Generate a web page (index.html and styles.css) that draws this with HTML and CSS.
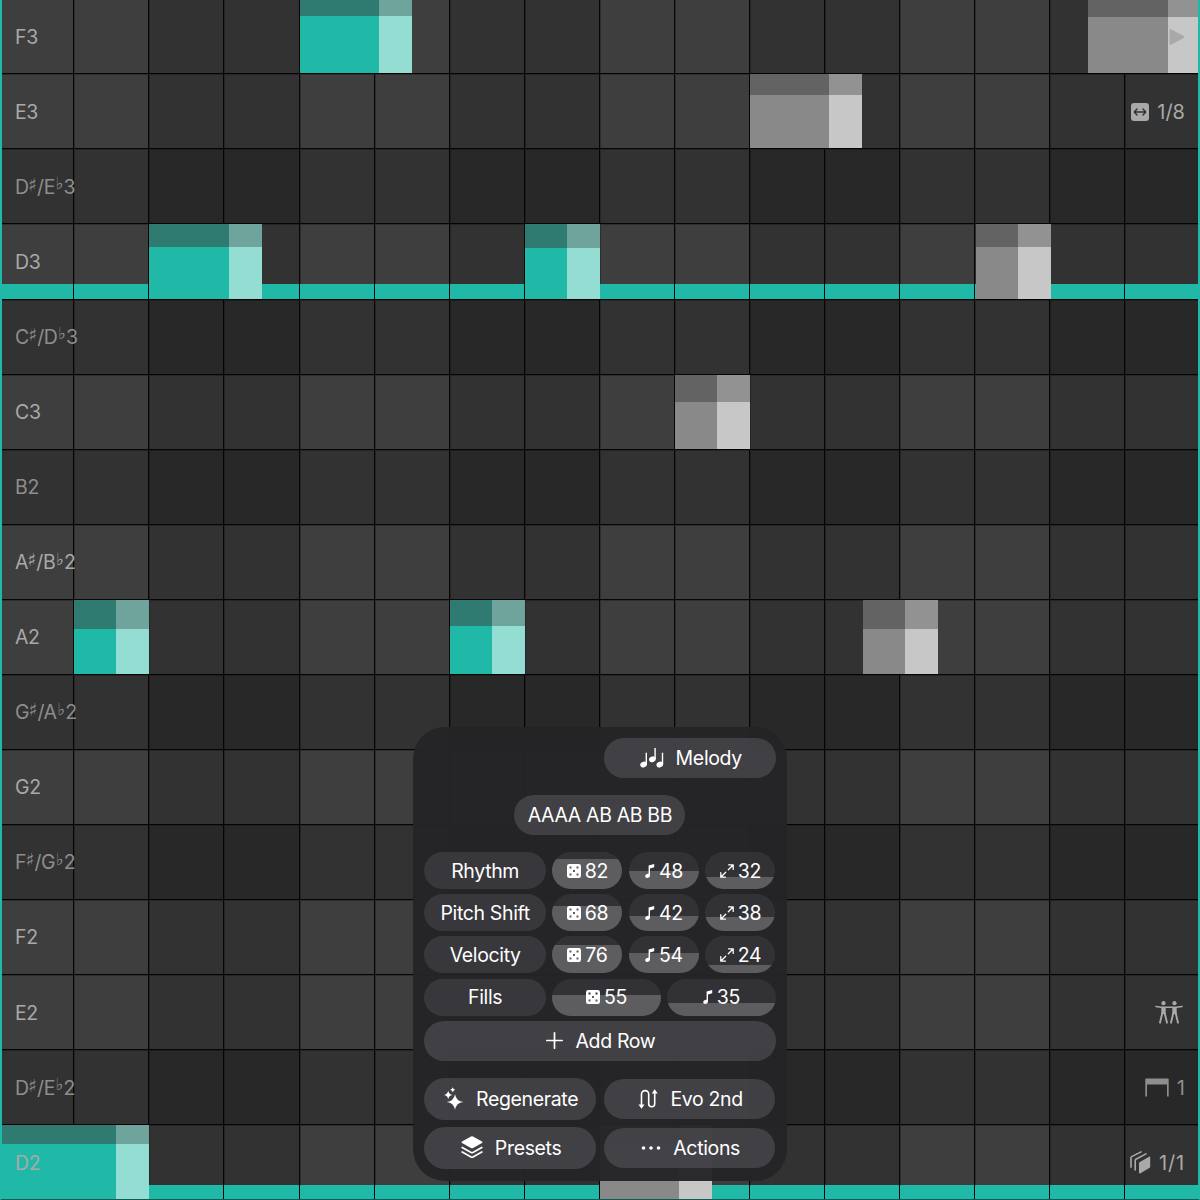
FILE: index.html
```html
<!DOCTYPE html>
<html lang="en">
<head>
    <meta charset="UTF-8">
    <meta name="viewport" content="width=device-width, initial-scale=1.0">
    <title>Melody</title>
    <link rel="stylesheet" href="styles.css">
</head>
<body>
    <svg class="sprite" aria-hidden="true">
        <symbol id="i-dice" viewBox="0 0 14 14">
            <path fill="currentColor" fill-rule="evenodd" d="M2.2 0h9.6Q14 0 14 2.2v9.6Q14 14 11.8 14H2.2Q0 14 0 11.8V2.2Q0 0 2.2 0zM2.5 2.5v2h2v-2zM9.5 2.5v2h2v-2zM6 6v2h2V6zM2.5 9.5v2h2v-2zM9.5 9.5v2h2v-2z"/>
        </symbol>
        <symbol id="i-note" viewBox="0 0 10 14">
            <path fill="currentColor" d="M3.6 1.6L9.2 0v3.3L5 4.5v6.8C5 13 3.7 14 2.2 14 1 14 .2 13.3.2 12.3c0-1.2.9-1.9 2.2-2.2.8-.2 1.2-.4 1.2-1z"/>
        </symbol>
        <symbol id="i-range" viewBox="0 0 14 14">
            <path fill="none" stroke="currentColor" stroke-width="1.3" stroke-linecap="round" stroke-linejoin="round" d="M8.6.8h4.6v4.6M5.4 13.2H.8V8.6M13 1L8.3 5.7M5.7 8.3L1 13"/>
        </symbol>
    </svg>

    <div class="roll">
        <div class="grid" id="grid"></div>
        <div class="notes" id="notes"></div>
        <div class="labels" id="labels"></div>
        <div class="side">
            <div class="side-item row-play">
                <svg width="16" height="18" viewBox="0 0 16 18"><path fill="currentColor" d="M1.5 1l13.3 7.1q.9.9 0 1.8L1.5 17Q.5 17.2.5 16V2Q.5.8 1.5 1z"/></svg>
            </div>
            <div class="side-item row-step">
                <svg width="18" height="18" viewBox="0 0 18 18"><rect width="18" height="18" rx="3" fill="currentColor"/><path fill="none" stroke="#323232" stroke-width="1.4" stroke-linecap="round" stroke-linejoin="round" d="M3.6 9h10.8M6 6L3.3 9 6 12M12 6l2.7 3L12 12"/></svg>
                <span>1/8</span>
            </div>
            <div class="side-item row-people">
                <svg width="28" height="23" viewBox="0 0 28 23">
                    <g fill="currentColor"><circle cx="8.5" cy="2.2" r="2.1"/><circle cx="19.5" cy="2.2" r="2.1"/><path d="M6.3 6h4.4v7H6.3zM17.3 6h4.4v7h-4.4z"/></g>
                    <path fill="none" stroke="currentColor" stroke-width="1.5" stroke-linecap="round" stroke-linejoin="round" d="M.9 5.4L6.5 6.2h15L27.1 5.4"/>
                    <path fill="none" stroke="currentColor" stroke-width="1.9" stroke-linecap="round" d="M7.2 12.5L5 21.7M9.8 12.5l2.2 9.2M18.2 12.5L16 21.7M20.8 12.5l2.2 9.2"/>
                </svg>
            </div>
            <div class="side-item row-bar dim">
                <svg width="24" height="19" viewBox="0 0 24 19"><path fill="currentColor" d="M1 .5h22q.7 0 .7.7V18.5H22V6.5H2V18.5H.3V1.2Q.3.5 1 .5z"/></svg>
                <span>1</span>
            </div>
            <div class="side-item row-pages">
                <svg width="21" height="23" viewBox="0 0 21 23"><path fill="currentColor" d="M9.5 11.3L19 5.7q1.2-.6 1.2.8v9q0 1-.9 1.5l-8.8 5.2q-1.5.8-1.5-.8v-8.8q0-.9.5-1.3z"/><path fill="none" stroke="currentColor" stroke-width="1.6" stroke-linecap="round" d="M5.2 19V9.5q0-.8.7-1.2L16 2.9M1 16.2V6.8q0-.8.7-1.2L11 .9"/></svg>
                <span>1/1</span>
            </div>
        </div>
    </div>

    <div class="panel">
        <div class="panel-row end">
            <button class="btn half">
                <svg width="24" height="20" viewBox="0 0 24 20"><g fill="currentColor"><ellipse cx="3.6" cy="16.5" rx="3.4" ry="2.8" transform="rotate(-25 3.6 16.5)"/><ellipse cx="12.4" cy="11.3" rx="3.4" ry="2.8" transform="rotate(-25 12.4 11.3)"/><ellipse cx="19.8" cy="16.5" rx="3.4" ry="2.8" transform="rotate(-25 19.8 16.5)"/><path d="M5.6 4.8h1.4v11.5H5.6zM14.4 0h1.4v11.2h-1.4zM21.8 4.8h1.4v11.5h-1.4z"/></g></svg>
                <span>Melody</span>
            </button>
        </div>
        <button class="btn pattern"><span>AAAA AB AB BB</span></button>

        <div class="params" id="params"></div>

        <button class="btn add">
            <svg width="17" height="17" viewBox="0 0 16 16"><path fill="none" stroke="currentColor" stroke-width="1.6" stroke-linecap="round" d="M8 .8v14.4M.8 8h14.4"/></svg>
            <span>Add Row</span>
        </button>

        <div class="actions">
            <button class="btn tall">
                <svg width="20" height="23" viewBox="0 0 20 23"><g fill="currentColor"><path d="M11 7.2Q12.3 14.2 19.2 15q-6.9.8-8.2 7.8Q9.7 15.8 2.8 15 9.7 14.2 11 7.2z"/><path d="M4.2 3.8q.6 3.6 4.2 4.2-3.6.6-4.2 4.2Q3.6 8.6 0 8q3.6-.6 4.2-4.2zM8.7.3q.5 2 2.5 2.5-2 .5-2.5 2.5-.5-2-2.5-2.5 2-.5 2.5-2.5z"/></g></svg>
                <span>Regenerate</span>
            </button>
            <button class="btn">
                <svg width="20" height="20" viewBox="0 0 20 20"><path fill="none" stroke="currentColor" stroke-width="1.6" d="M3.5 17V5.2a3.6 3.6 0 0 1 7.2 0v9.6a3 3 0 0 0 6 0V3"/><path fill="currentColor" d="M.5 15.5h6L3.5 19.7zM13.7 4.5h6L16.7.3z"/></svg>
                <span>Evo 2nd</span>
            </button>
            <button class="btn tall">
                <svg width="22" height="23" viewBox="0 0 22 23"><path fill="currentColor" d="M10 .5q1-.5 2 0l9 5q1 .7 0 1.4l-9 5q-1 .5-2 0l-9-5q-1-.7 0-1.4z"/><path fill="none" stroke="currentColor" stroke-width="1.7" stroke-linecap="round" d="M1.2 11.5l8.9 5q.9.5 1.8 0l8.9-5M1.2 16l8.9 5q.9.5 1.8 0l8.9-5"/></svg>
                <span>Presets</span>
            </button>
            <button class="btn">
                <svg width="20" height="6" viewBox="0 0 20 6"><g fill="currentColor"><circle cx="2.5" cy="3" r="1.8"/><circle cx="10" cy="3" r="1.8"/><circle cx="17.5" cy="3" r="1.8"/></g></svg>
                <span>Actions</span>
            </button>
        </div>
    </div>

    <script src="script.js"></script>
</body>
</html>
```
FILE: styles.css
```css
* {
    margin: 0;
    padding: 0;
    box-sizing: border-box;
}

body {
    width: 1200px;
    height: 1200px;
    overflow: hidden;
    position: relative;
    background: #0a0a0a;
    color: #fff;
    font-family: Inter, 'Liberation Sans', sans-serif;
    font-size: 19.5px;
    letter-spacing: -0.35px;
}

.sprite {
    display: none;
}

/* piano roll */
.roll {
    position: relative;
    width: 1200px;
    height: 1200px;
    overflow: hidden;
    display: flow-root;
}

.roll::after {
    content: "";
    position: absolute;
    inset: 0;
    border-left: 2px solid #20b8a7;
    border-right: 2px solid #20b8a7;
    border-bottom: 1px solid #0d5d54;
}

.grid {
    display: grid;
    grid-template-columns: repeat(16, 75.08px);
    grid-template-rows: repeat(16, 75.08px);
    margin: -0.75px 0 0 -0.75px;
}

.cell {
    background: #3e3e3e;
    border-right: 1px solid #050505;
    border-bottom: 1px solid #050505;
    box-shadow: inset 1px 1px rgba(0, 0, 0, 0.25);
}

.cell.off {
    background: #323232;
}

.cell.flat {
    background: #323232;
}

.cell.flat.off {
    background: #282828;
}

.cell.root {
    box-shadow: inset 0 -15px #20b8a7, inset 1px 1px rgba(0, 0, 0, 0.25);
}

.note {
    position: absolute;
    background: linear-gradient(#307b71 var(--shade), #20b8a7 var(--shade));
}

.note .tail {
    height: 100%;
    margin-left: auto;
    background: linear-gradient(#6ea49c var(--shade), #94ddd3 var(--shade));
}

.note.muted {
    background: linear-gradient(#636363 var(--shade), #898989 var(--shade));
}

.note.muted .tail {
    background: linear-gradient(#929292 var(--shade), #c7c7c7 var(--shade));
}

.labels,
.side {
    position: absolute;
    top: -1px;
    display: grid;
    grid-template-rows: repeat(16, 75.08px);
    align-items: center;
    color: #a9a9a9;
}

.labels {
    left: 15px;
}

.label {
    display: flex;
    align-items: center;
    height: 24px;
}

.acc {
    font-family: 'DejaVu Sans', sans-serif;
    font-size: 18px;
    line-height: 1;
    letter-spacing: 0;
    margin: -4px 0 0 -0.5px;
}

.acc.flat-sign {
    font-size: 17px;
    margin: -6px 0 0 0.5px;
}

.side {
    right: 15px;
    justify-items: end;
    font-size: 20px;
    letter-spacing: 0;
}

.side-item {
    display: flex;
    align-items: center;
    gap: 8px;
}

.row-play {
    grid-row: 1;
}

.row-step {
    grid-row: 2;
}

.row-people {
    grid-row: 14;
    margin-right: 2px;
}

.row-bar {
    grid-row: 15;
}

.row-pages {
    grid-row: 16;
}

.row-pages span {
    letter-spacing: 0.8px;
}

.dim {
    color: #8e8e8e;
}

/* floating controls */
.panel {
    position: absolute;
    left: 413px;
    top: 727px;
    width: 374px;
    height: 454px;
    padding: 11px 11.5px 0 11.4px;
    border-radius: 32px;
    background: rgba(36, 36, 38, 0.96);
    display: flex;
    flex-direction: column;
}

.panel-row {
    display: flex;
}

.panel-row.end {
    justify-content: flex-end;
}

.btn {
    height: 40px;
    border: none;
    border-radius: 21px;
    background: rgba(108, 106, 115, 0.4);
    color: #fff;
    font: inherit;
    letter-spacing: inherit;
    display: flex;
    align-items: center;
    justify-content: center;
    gap: 12px;
    white-space: nowrap;
}

.btn svg {
    margin-left: 2px;
}

.btn.half {
    width: 171.5px;
}

.btn.pattern {
    width: 171px;
    margin: 17px auto;
}

.params {
    display: flex;
    flex-direction: column;
    gap: 5.2px;
}

.param {
    display: flex;
    gap: 6.5px;
    height: 37px;
}

.param-name,
.pill {
    border-radius: 18.5px;
    background: #38373b;
    display: flex;
    align-items: center;
    justify-content: center;
}

.param-name {
    width: 121.5px;
}

.pill {
    position: relative;
    flex: 1;
    gap: 4px;
    overflow: hidden;
    background: #323136;
}

.pill .fill {
    position: absolute;
    left: 0;
    right: 0;
    bottom: 0;
    background: #5d5d60;
}

.pill svg,
.pill span {
    position: relative;
}

.btn.add {
    margin-top: 5px;
}

.actions {
    display: grid;
    grid-template-columns: 171.5px 171.5px;
    gap: 7px 8px;
    align-items: center;
    margin-top: 17px;
}

.btn.tall {
    height: 42px;
}
```
FILE: script.js
```js
const rows = ['F3', 'E3', 'D♯/E♭3', 'D3', 'C♯/D♭3', 'C3', 'B2', 'A♯/B♭2',
    'A2', 'G♯/A♭2', 'G2', 'F♯/G♭2', 'F2', 'E2', 'D♯/E♭2', 'D2'];
const outOfScale = [2, 4, 6, 9, 11, 14];
const roots = [3, 15];

// x, width, row, tail width, shade height, muted
const notes = [
    [300, 112, 0, 33, 16, false],
    [149, 113, 3, 33, 23, false],
    [525, 75, 3, 33, 24, false],
    [74, 75, 8, 33, 29, false],
    [450, 75, 8, 33, 26, false],
    [0, 149, 15, 33, 19, false],
    [1088, 112, 0, 32, 17, true],
    [750, 112, 1, 33, 21, true],
    [976, 75, 3, 33, 23, true],
    [675, 75, 5, 33, 27, true],
    [863, 75, 8, 33, 29, true],
    [600, 112, 15, 33, 19, true]
];

const params = [
    ['Rhythm', 82, 48, 32],
    ['Pitch Shift', 68, 42, 38],
    ['Velocity', 76, 54, 24],
    ['Fills', 55, 35]
];
const icons = [['dice', 14, 14], ['note', 10, 14], ['range', 14, 14]];

const rowTop = r => Math.max(0, Math.round(r * 75.08 - 0.75));

const accidentals = name => name
    .replace('♯', '<span class="acc">♯</span>')
    .replace('♭', '<span class="acc flat-sign">♭</span>');

let cells = '';
let labels = '';
rows.forEach((name, r) => {
    const flat = outOfScale.includes(r);
    for (let c = 0; c < 16; c++) {
        let cls = 'cell';
        if (flat) cls += ' flat';
        if (c % 4 > 1) cls += ' off';
        if (roots.includes(r)) cls += ' root';
        cells += `<div class="${cls}"></div>`;
    }
    labels += `<div class="label${flat ? ' dim' : ''}">${accidentals(name)}</div>`;
});
document.getElementById('grid').innerHTML = cells;
document.getElementById('labels').innerHTML = labels;

document.getElementById('notes').innerHTML = notes.map(([x, w, r, tail, shade, muted]) => {
    const top = rowTop(r);
    const height = rowTop(r + 1) - top - 1;
    return `<div class="note${muted ? ' muted' : ''}" style="left:${x}px;top:${top}px;width:${w}px;height:${height}px;--shade:${shade}px">
        <div class="tail" style="width:${tail}px"></div>
    </div>`;
}).join('');

document.getElementById('params').innerHTML = params.map(([name, ...values]) => {
    const pills = values.map((v, i) => {
        const [id, w, h] = icons[i];
        return `<div class="pill"><div class="fill" style="height:${v}%"></div>
            <svg width="${w}" height="${h}"><use href="#i-${id}"/></svg><span>${v}</span></div>`;
    }).join('');
    return `<div class="param"><div class="param-name">${name}</div>${pills}</div>`;
}).join('');
```
